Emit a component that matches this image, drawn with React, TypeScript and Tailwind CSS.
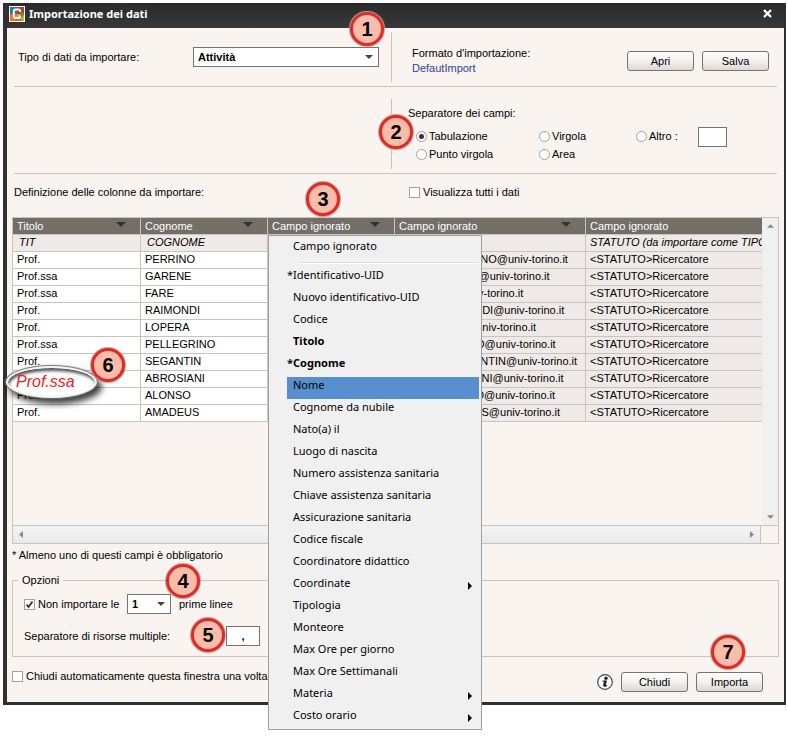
import { useState } from "react"
import type { ReactNode } from "react"

const rows = [
    { title: "Prof.", name: "PERRINO", mail: "giovanna.PERRINO@univ-torino.it" },
    { title: "Prof.ssa", name: "GARENE", mail: "chiara.GARENE@univ-torino.it" },
    { title: "Prof.ssa", name: "FARE", mail: "sara.FARE@univ-torino.it" },
    { title: "Prof.", name: "RAIMONDI", mail: "stefano.RAIMONDI@univ-torino.it" },
    { title: "Prof.", name: "LOPERA", mail: "ugo.LOPERA@univ-torino.it" },
    { title: "Prof.ssa", name: "PELLEGRINO", mail: "pa.PELLEGRINO@univ-torino.it" },
    { title: "Prof.", name: "SEGANTIN", mail: "francesco.SEGANTIN@univ-torino.it" },
    // title of this row is shown by the lens
    { title: "", name: "ABROSIANI", mail: "marco.ABROSIANI@univ-torino.it" },
    { title: "Prof.ssa", name: "ALONSO", mail: "antonio.ALONSO@univ-torino.it" },
    { title: "Prof.", name: "AMADEUS", mail: "davide.AMADEUS@univ-torino.it" },
]

type MenuItem = {
    label: string,
    bold?: boolean,
    star?: boolean,
    sub?: boolean,
}

const menuItems: MenuItem[] = [
    { label: "Identificativo-UID", star: true },
    { label: "Nuovo identificativo-UID" },
    { label: "Codice" },
    { label: "Titolo", bold: true },
    { label: "Cognome", bold: true, star: true },
    { label: "Nome" },
    { label: "Cognome da nubile" },
    { label: "Nato(a) il" },
    { label: "Luogo di nascita" },
    { label: "Numero assistenza sanitaria" },
    { label: "Chiave assistenza sanitaria" },
    { label: "Assicurazione sanitaria" },
    { label: "Codice fiscale" },
    { label: "Coordinatore didattico" },
    { label: "Coordinate", sub: true },
    { label: "Tipologia" },
    { label: "Monteore" },
    { label: "Max Ore per giorno" },
    { label: "Max Ore Settimanali" },
    { label: "Materia", sub: true },
    { label: "Costo orario", sub: true },
]

function Badge({ n, className }: { n: number, className: string }) {
    return (
        <span className={`absolute z-20 flex h-[34px] w-[34px] items-center justify-center rounded-full border-[3px] border-[#e02a26] bg-[#fbbcaa] text-[20px] leading-none font-bold text-black shadow-[0_0_1px_1px_#b9a39c] ${className}`}>
            {n}
        </span>
    )
}

function Button({ children }: { children: ReactNode }) {
    return (
        <button className="h-5 w-[67px] rounded-[3px] border border-[#77736d] bg-linear-to-b from-white via-[#f4f1ef] to-[#dcd7d4] text-center">
            {children}
        </button>
    )
}

function Radio({ label, checked, onChange }: { label: string, checked: boolean, onChange: () => void }) {
    return (
        <label className="flex h-[18px] items-center gap-0.5">
            <span className="relative flex h-[11px] w-[11px]">
                <input
                    type="radio"
                    name="separatore"
                    checked={checked}
                    onChange={onChange}
                    className="h-[11px] w-[11px] appearance-none rounded-full border border-[#a5a19d] bg-white"
                />
                {checked && <span className="pointer-events-none absolute top-[3px] left-[3px] h-[5px] w-[5px] rounded-full bg-[#333]" />}
            </span>
            {label}
        </label>
    )
}

function Checkbox({ label, defaultChecked = false }: { label: string, defaultChecked?: boolean }) {
    const [on, setOn] = useState(defaultChecked)
    return (
        <label className="flex items-center gap-[3px] whitespace-nowrap">
            <span className="relative flex h-[11px] w-[11px]">
                <input
                    type="checkbox"
                    checked={on}
                    onChange={() => setOn(!on)}
                    className="h-[11px] w-[11px] appearance-none border border-[#a5a19d] bg-white"
                />
                {on && (
                    <svg viewBox="0 0 11 11" className="pointer-events-none absolute inset-0 h-[11px] w-[11px]">
                        <path d="M2.5 5.5 L4.5 8 L8.5 2.5" fill="none" stroke="#333" strokeWidth="1.8" />
                    </svg>
                )}
            </span>
            {label}
        </label>
    )
}

function Arrow({ className }: { className: string }) {
    return (
        <svg viewBox="0 0 10 5" className={className}>
            <path d="M0 0 H10 L5 5 Z" fill="currentColor" />
        </svg>
    )
}

function HeadCell({ label, arrow = true }: { label: string, arrow?: boolean }) {
    return (
        <th className="h-[17px] border-r border-b border-[#cbc3bd] bg-[#736e67] p-0 text-left font-normal text-white last:border-r-0">
            <div className="flex h-4 items-center justify-between pr-[14px] pl-1 whitespace-nowrap">
                {label}
                {arrow && <Arrow className="mb-[3px] h-[5px] w-[10px] text-[#2f3336]" />}
            </div>
        </th>
    )
}

function Cell({ children, tone = "bg-white" }: { children?: ReactNode, tone?: string }) {
    return (
        <td className={`h-[17px] overflow-hidden border-r border-b border-[#cbc3bd] p-0 pb-0.5 pl-1 whitespace-nowrap last:border-r-0 ${tone}`}>
            {children}
        </td>
    )
}

function DataTable() {
    const grey = "bg-[#efeae7]"
    return (
        <table className="w-full table-fixed border-separate border-spacing-0 leading-[14px]">
            <colgroup>
                <col className="w-[128px]" />
                <col className="w-[127px]" />
                <col className="w-[127px]" />
                <col className="w-[191px]" />
                <col />
            </colgroup>
            <thead>
                <tr>
                    <HeadCell label="Titolo" />
                    <HeadCell label="Cognome" />
                    <HeadCell label="Campo ignorato" />
                    <HeadCell label="Campo ignorato" />
                    <HeadCell label="Campo ignorato" arrow={false} />
                </tr>
            </thead>
            <tbody>
                <tr className="italic">
                    <Cell tone={grey}><span className="pl-0.5">TIT</span></Cell>
                    <Cell tone={grey}><span className="pl-0.5">COGNOME</span></Cell>
                    <Cell tone={grey} />
                    <Cell tone={grey} />
                    <Cell tone={grey}>STATUTO (da importare come TIPO)</Cell>
                </tr>
                {rows.map((row) => (
                    <tr key={row.name}>
                        <Cell>{row.title}</Cell>
                        <Cell>{row.name}</Cell>
                        <Cell tone={grey} />
                        <Cell tone={grey}>{row.mail}</Cell>
                        <Cell tone={grey}>&lt;STATUTO&gt;Ricercatore</Cell>
                    </tr>
                ))}
            </tbody>
        </table>
    )
}

function FieldMenu() {
    const [active, setActive] = useState("Nome")
    return (
        <div role="menu" className="absolute top-[18px] left-[256px] z-10 w-[214px] border border-[#a0a0a0] bg-[#f0f0f0] pt-0.5 pr-0.5 pl-[18px] font-['Noto_Sans','Open_Sans',sans-serif] text-[11px] leading-4">
            <button role="menuitem" className="block h-[22px] w-full pb-1.5 pl-1.5 text-left">Campo ignorato</button>
            <div className="mt-0.5 mb-[3px] ml-3 h-0.5 border-t border-b border-t-[#dcdcdc] border-b-white" />
            {menuItems.map((item) => (
                <button
                    key={item.label}
                    role="menuitem"
                    onMouseEnter={() => setActive(item.label)}
                    className={`flex h-[22px] w-full items-center pr-[7px] pb-1.5 text-left ${item.label === active ? "bg-[#558fcd]" : ""} ${item.bold ? "font-bold" : ""}`}
                >
                    <span className="w-1.5 shrink-0">{item.star ? "*" : ""}</span>
                    <span className="grow">{item.label}</span>
                    {item.sub && (
                        <svg viewBox="0 0 4 8" className="mt-1.5 h-2 w-1">
                            <path d="M0 0 L4 4 L0 8 Z" fill="black" />
                        </svg>
                    )}
                </button>
            ))}
        </div>
    )
}

function Logo() {
    return (
        <svg viewBox="0 0 16 16" className="h-4 w-4">
            <rect width="16" height="16" fill="white" />
            <rect x="1" y="1" width="7" height="7" fill="#1f7f9c" />
            <rect x="8" y="1" width="7" height="7" fill="#c8332b" />
            <rect x="1" y="8" width="7" height="7" fill="#e9772a" />
            <rect x="8" y="8" width="7" height="7" fill="#e8a62c" />
            <path d="M11 4 L15 8 V9 L11 13 Z" fill="#5f8f3c" />
            <path d="M11 12 L14 15 H8 L5 12 Z" fill="#7a3b1c" opacity="0.4" />
            <path d="M11 6 V5 Q11 3.500 9.500 3.500 H6.500 Q4.800 3.500 4.800 5.200 V10.300 Q4.800 12 6.500 12 H9.500 Q11 12 11 10.500 V9.500" fill="none" stroke="white" strokeWidth="2" />
        </svg>
    )
}

export default function App() {
    const [separator, setSeparator] = useState("Tabulazione")
    const radio = (label: string) => (
        <Radio label={label} checked={separator === label} onChange={() => setSeparator(label)} />
    )

    return (
        <div className="min-h-screen bg-white pt-[3px] pr-0.5 pb-9 pl-[3px] font-['Liberation_Sans',Arial,sans-serif] text-[11px] leading-[15px] text-black">
            <div className="border-r-2 border-b-[3px] border-l-4 border-[#303030] bg-[#f9f4f0]">
                <header className="flex h-[25px] items-center justify-between bg-linear-to-b from-[#2a2a2a] to-[#383838] pr-3 pb-1 pl-0.5 text-white">
                    <div className="flex items-center gap-1">
                        <Logo />
                        <h1 className="font-['Noto_Sans','Open_Sans',sans-serif] text-[11px] font-bold">Importazione dei dati</h1>
                    </div>
                    <button aria-label="Chiudi finestra" className="flex">
                        <svg viewBox="0 0 9 9" className="h-[9px] w-[9px]">
                            <path d="M1 1 L8 8 M8 1 L1 8" stroke="white" strokeWidth="2.4" />
                        </svg>
                    </button>
                </header>

                <main className="px-[5px]">
                    {/* data type and format */}
                    <section className="relative mx-0.5 flex border-b border-[#c9c2bd] py-1">
                        <div className="flex h-[50px] w-[378px] items-center border-r border-[#c9c2bd] pl-1">
                            <label htmlFor="tipo" className="w-[175px]">Tipo di dati da importare:</label>
                            <div className="relative flex">
                                <select id="tipo" className="h-5 w-[186px] appearance-none border border-[#77736d] bg-white pl-1 font-bold">
                                    <option>Attività</option>
                                </select>
                                <Arrow className="pointer-events-none absolute top-2 right-1.5 h-1 w-2 text-[#444]" />
                            </div>
                        </div>
                        <div className="flex grow items-center justify-between pt-2 pr-2 pl-5">
                            <div>
                                <p>Formato d'importazione:</p>
                                <a href="#" className="block text-[#2c429c]">DefautImport</a>
                            </div>
                            <div className="flex gap-2">
                                <Button>Apri</Button>
                                <Button>Salva</Button>
                            </div>
                        </div>
                        <Badge n={1} className="-top-4 left-[336px]" />
                    </section>

                    {/* field separator */}
                    <section className="relative mx-0.5 flex border-b border-[#c9c2bd] pt-3 pb-1">
                        <div className="h-[70px] w-[378px] border-r border-[#c9c2bd]" />
                        <div className="grow pt-[7px] pl-4">
                            <p>Separatore dei campi:</p>
                            <div className="flex pt-1.5 pl-2">
                                <div className="w-[123px]">
                                    {radio("Tabulazione")}
                                    {radio("Punto virgola")}
                                </div>
                                <div className="w-[97px]">
                                    {radio("Virgola")}
                                    {radio("Area")}
                                </div>
                                <div className="flex h-5 items-start">
                                    <div className="w-[62px]">{radio("Altro :")}</div>
                                    <input aria-label="Altro separatore" className="h-5 w-[29px] border border-[#77736d] bg-white px-1" />
                                </div>
                            </div>
                        </div>
                        <Badge n={2} className="top-7 left-[365px]" />
                    </section>

                    <section className="relative mx-0.5 flex h-[43px] pt-[11px]">
                        <p className="w-[395px]">Definizione delle colonne da importare:</p>
                        <div>
                            <Checkbox label="Visualizza tutti i dati" />
                        </div>
                        <Badge n={3} className="top-2 left-[292px]" />
                    </section>

                    {/* imported columns */}
                    <section className="relative">
                        <div className="flex h-[308px]">
                            <div className="min-w-0 grow overflow-hidden border-t border-l border-[#cbc3bd]">
                                <DataTable />
                            </div>
                            <div className="flex w-[17px] shrink-0 flex-col items-center justify-between border-t border-r border-[#cbc3bd] bg-[#f0f0f0] py-1.5">
                                <Arrow className="h-1 w-[7px] rotate-180 text-[#8a8a8a]" />
                                <Arrow className="h-1 w-[7px] text-[#8a8a8a]" />
                            </div>
                        </div>
                        <div className="flex h-[19px] border border-[#cbc3bd]">
                            <div className="flex grow items-center justify-between border-r border-[#cbc3bd] bg-linear-to-b from-[#f4f4f4] to-[#e9e9e9] px-1.5">
                                <svg viewBox="0 0 4 7" className="h-[7px] w-1"><path d="M4 0 V7 L0 3.500 Z" fill="#8a8a8a" /></svg>
                                <svg viewBox="0 0 4 7" className="h-[7px] w-1"><path d="M0 0 V7 L4 3.500 Z" fill="#8a8a8a" /></svg>
                            </div>
                            <div className="w-[17px]" />
                        </div>
                        <div className="absolute top-[149px] -left-1.5 z-10 flex h-[32px] w-[91px] items-center rounded-[50%] border-2 border-[#f4f4f4] bg-white pb-0.5 pl-2 text-[16px] text-[#ee1c25] italic shadow-[0_0_1px_1px_#777,4px_5px_6px_1px_rgba(0,0,0,0.75),inset_1px_3px_3px_rgba(0,0,0,0.65)]">
                            Prof.ssa
                        </div>
                        <Badge n={6} className="top-[131px] left-[79px]" />
                        <FieldMenu />
                    </section>

                    <p className="pt-1">* Almeno uno di questi campi è obbligatorio</p>

                    <fieldset className="relative mt-2.5 border border-[#cbc3bd] px-[11px] pb-2.5">
                        <legend className="-ml-1.5 px-1">Opzioni</legend>
                        <div className="flex items-center pt-1.5">
                            <div className="w-[103px]">
                                <Checkbox label="Non importare le" defaultChecked />
                            </div>
                            <div className="relative flex">
                                <select aria-label="Numero di linee" className="h-5 w-11 appearance-none border border-[#77736d] bg-white pl-1 font-bold">
                                    <option>1</option>
                                    <option>2</option>
                                </select>
                                <Arrow className="pointer-events-none absolute top-2 right-1.5 h-1 w-2 text-[#444]" />
                            </div>
                            <span className="pl-2">prime linee</span>
                        </div>
                        <div className="flex items-center pt-3">
                            <label htmlFor="multiple" className="w-[202px]">Separatore di risorse multiple:</label>
                            <input id="multiple" defaultValue="," className="h-5 w-[34px] border border-[#77736d] bg-white text-center font-bold" />
                        </div>
                        <Badge n={4} className="-top-6 left-[153px]" />
                        <Badge n={5} className="top-[30px] left-[178px]" />
                    </fieldset>

                    <footer className="relative flex items-start justify-between pt-3 pr-4 pb-2.5">
                        <Checkbox label="Chiudi automaticamente questa finestra una volta conclusa" />
                        <div className="flex items-center gap-2 pt-[3px]">
                            <svg viewBox="0 0 16 16" className="h-4 w-4">
                                <circle cx="8" cy="8" r="7.300" fill="white" stroke="#444b52" strokeWidth="1.200" />
                                <circle cx="9" cy="4.200" r="1.700" fill="#222" />
                                <path d="M5.500 6.500 H10 L9 10.800 Q8.900 11.500 10.300 11 L10 12.200 Q5.800 13.600 6.100 11.300 L6.900 7.600 H5.300 Z" fill="#222" />
                            </svg>
                            <Button>Chiudi</Button>
                            <Button>Importa</Button>
                        </div>
                        <Badge n={7} className="-top-[22px] right-[34px]" />
                    </footer>
                </main>
            </div>
        </div>
    )
}
